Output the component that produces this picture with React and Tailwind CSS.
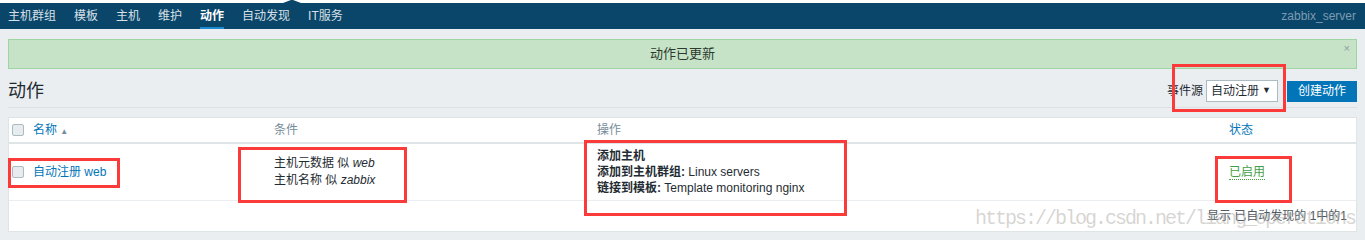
const FONT = { fontFamily: '"Liberation Sans", Arial, "Noto Sans CJK SC", sans-serif' };

const NAV = ['主机群组', '模板', '主机', '维护', '动作', '自动发现', 'IT服务'];

function Checkbox() {
  return <span className="block h-[12px] w-[12px] rounded-[2px] border border-[#acbbc2] bg-[#e9ecee]" />;
}

function Mark({ className }) {
  return <div className={`pointer-events-none absolute border-[3px] border-[#fb3a3a] ${className}`} />;
}

export default function App() {
  return (
    <div className="relative h-[240px] w-[1365px] overflow-hidden bg-[#ebeef0] text-[12px] text-[#1f2c33]" style={FONT}>
      <div className="relative h-[3px] bg-white">
        <svg className="absolute left-[283px] top-0" width="18" height="3" viewBox="0 0 18 3">
          <polygon points="0,3 8,0 10,0 18,3" fill="#0a466a" />
        </svg>
      </div>

      <nav className="flex h-[26px] items-center justify-between bg-[#0a466a] pl-2 pr-[9px]">
        <ul className="flex h-full gap-[18px]">
          {NAV.map((item) => (
            <li
              key={item}
              className={`relative flex h-full items-center ${
                item === '动作' ? 'font-bold text-white' : 'text-[#d7e0e6]'
              }`}
            >
              {item}
              {item === '动作' && <span className="absolute bottom-0 left-0 right-0 h-[2px] bg-[#1d8cd0]" />}
            </li>
          ))}
        </ul>
        <span className="text-[#7b9bb1]">zabbix_server</span>
      </nav>

      <div className="px-2 pt-[10px]">
        <div className="relative flex h-[30px] items-center justify-center border border-[#9fd5a2] bg-[#c6e3c7] text-[13px] text-[#2c3a2e]">
          动作已更新
          <span className="absolute right-[6px] top-[3px] text-[11px] leading-none text-[#8e9fa8]">×</span>
        </div>

        <div className="flex items-center justify-between border-b border-[#dde1e4] pb-[5px] pt-[11px]">
          <h1 className="text-[18px] leading-[22px] text-[#1f2c33]">动作</h1>
          <div className="flex items-center">
            <span className="mr-[3px]">事件源</span>
            <div className="flex h-[22px] w-[72px] items-center justify-between border border-[#acbbc2] bg-white pl-[4px] pr-[6px]">
              <span>自动注册</span>
              <span className="text-[9px]">▼</span>
            </div>
            <button className="ml-[9px] h-[21px] w-[70px] bg-[#0275b8] text-white">创建动作</button>
          </div>
        </div>

        <div className="mt-[9px] border border-[#dfe4e7] bg-white">
          <div className="grid h-[26px] grid-cols-[24px_241px_323px_632px_1fr] items-center border-b-2 border-[#dfe4e7]">
            <div className="pl-[3px]"><Checkbox /></div>
            <div className="text-[#0275b8]">
              名称 <span className="text-[8px] text-[#768d99]">▲</span>
            </div>
            <div className="text-[#768d99]">条件</div>
            <div className="text-[#768d99]">操作</div>
            <div className="text-[#0275b8]">状态</div>
          </div>

          <div className="grid h-[57px] grid-cols-[24px_241px_323px_632px_1fr] items-center border-b border-[#ebeef0]">
            <div className="pl-[3px]"><Checkbox /></div>
            <div className="text-[#0275b8]">自动注册 web</div>
            <div className="leading-[17px]">
              <div>主机元数据 似 <i>web</i></div>
              <div>主机名称 似 <i>zabbix</i></div>
            </div>
            <div className="leading-4">
              <div className="font-bold">添加主机</div>
              <div><b>添加到主机群组:</b> Linux servers</div>
              <div><b>链接到模板:</b> Template monitoring nginx</div>
            </div>
            <div>
              <span className="border-b border-dotted border-[#429e47] text-[#429e47]">已启用</span>
            </div>
          </div>

          <div className="flex h-[30px] items-center justify-end pr-[9px] text-[#4f5b63]">显示 已自动发现的 1中的1</div>
        </div>
      </div>

      <div
        className="pointer-events-none absolute left-[975px] top-[207px] text-[20px] leading-[24px] tracking-[-2px] text-[rgba(165,160,155,0.45)]"
        style={{ fontFamily: '"Liberation Mono", monospace' }}
      >
        https://blog.csdn.net/liang_operations
      </div>

      <Mark className="left-[1172px] top-[64px] h-[48px] w-[114px]" />
      <Mark className="left-[8px] top-[158px] h-[30px] w-[112px]" />
      <Mark className="left-[238px] top-[147px] h-[56px] w-[169px]" />
      <Mark className="left-[584px] top-[140px] h-[76px] w-[263px]" />
      <Mark className="left-[1215px] top-[156px] h-[47px] w-[77px]" />
    </div>
  );
}
